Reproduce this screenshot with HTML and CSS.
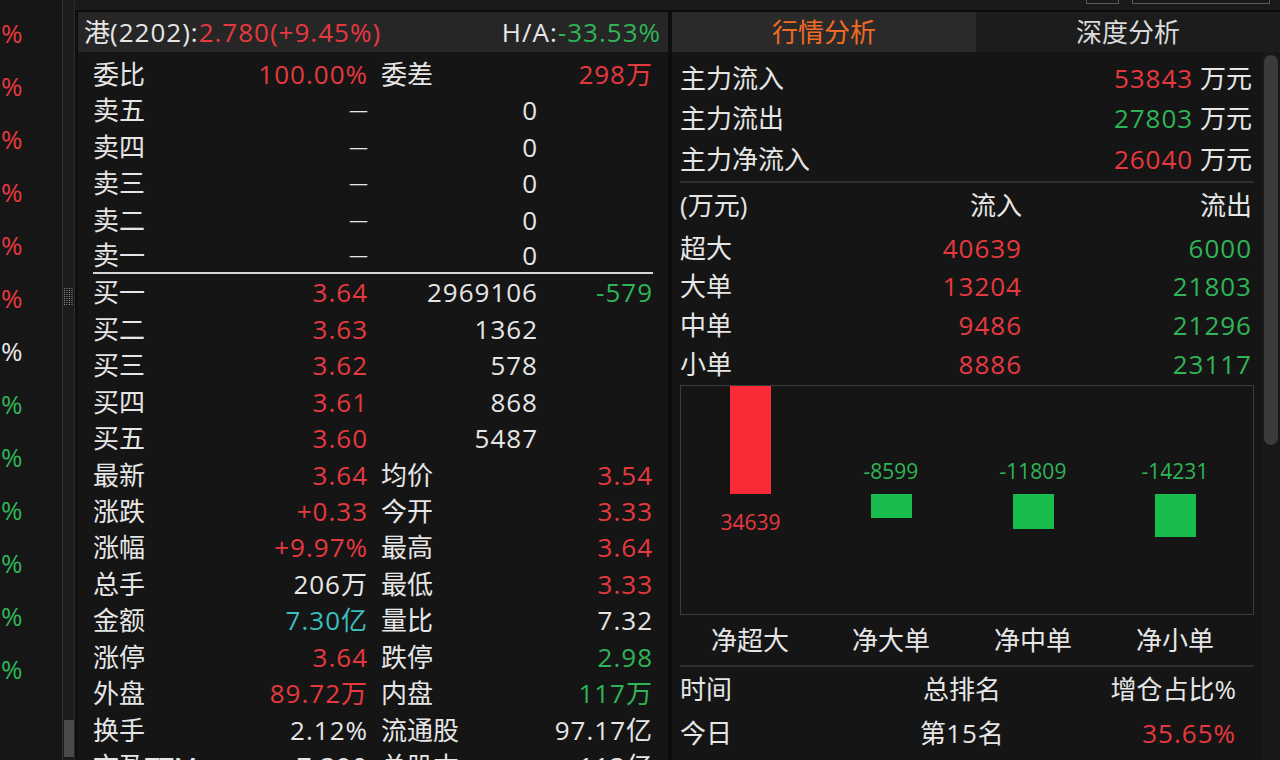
FILE: index.html
```html
<!DOCTYPE html>
<html lang="zh-CN">
<head>
<meta charset="utf-8">
<title>行情分析</title>
<link rel="stylesheet" href="styles.css">
</head>
<body>
<div class="screen">
  <aside class="ticker">
    <div class="pct up">%</div>
    <div class="pct up">%</div>
    <div class="pct up">%</div>
    <div class="pct up">%</div>
    <div class="pct up">%</div>
    <div class="pct up">%</div>
    <div class="pct flat">%</div>
    <div class="pct down">%</div>
    <div class="pct down">%</div>
    <div class="pct down">%</div>
    <div class="pct down">%</div>
    <div class="pct down">%</div>
    <div class="pct down">%</div>
  </aside>
  <div class="splitter">
    <svg class="grip" width="11" height="17" viewBox="0 0 11 17">
      <g stroke="#8c8c8c" stroke-width="1" stroke-dasharray="1 1">
        <line x1="1.5" y1="0" x2="1.5" y2="17"/>
        <line x1="4" y1="0" x2="4" y2="17"/>
        <line x1="6.5" y1="0" x2="6.5" y2="17"/>
        <line x1="9" y1="0" x2="9" y2="17"/>
      </g>
    </svg>
    <div class="thumb"></div>
  </div>
  <div class="workspace">
    <div class="topbar">
      <span class="tb-box small"></span>
      <span class="tb-box wide"></span>
    </div>
    <div class="panels">
      <section class="quote">
        <header class="quote-head">
          <div><span class="flat">港</span><span class="flat num">(2202):</span><span class="up num">2.780(+9.45%)</span></div>
          <div><span class="flat num">H/A:</span><span class="down num">-33.53%</span></div>
        </header>
        <div class="book">
          <div class="row"><span>委比</span><span class="v up num">100.00%</span><span class="l2">委差</span><span class="v up num">298万</span></div>
          <div class="row"><span>卖五</span><span class="v"><span class="dash">—</span></span><span class="v num">0</span><span></span></div>
          <div class="row"><span>卖四</span><span class="v"><span class="dash">—</span></span><span class="v num">0</span><span></span></div>
          <div class="row"><span>卖三</span><span class="v"><span class="dash">—</span></span><span class="v num">0</span><span></span></div>
          <div class="row"><span>卖二</span><span class="v"><span class="dash">—</span></span><span class="v num">0</span><span></span></div>
          <div class="row last-sell"><span>卖一</span><span class="v"><span class="dash">—</span></span><span class="v num">0</span><span></span></div>
          <div class="row"><span>买一</span><span class="v up num">3.64</span><span class="v num">2969106</span><span class="v down num">-579</span></div>
          <div class="row"><span>买二</span><span class="v up num">3.63</span><span class="v num">1362</span><span></span></div>
          <div class="row"><span>买三</span><span class="v up num">3.62</span><span class="v num">578</span><span></span></div>
          <div class="row"><span>买四</span><span class="v up num">3.61</span><span class="v num">868</span><span></span></div>
          <div class="row"><span>买五</span><span class="v up num">3.60</span><span class="v num">5487</span><span></span></div>
          <div class="row"><span>最新</span><span class="v up num">3.64</span><span class="l2">均价</span><span class="v up num">3.54</span></div>
          <div class="row"><span>涨跌</span><span class="v up num">+0.33</span><span class="l2">今开</span><span class="v up num">3.33</span></div>
          <div class="row"><span>涨幅</span><span class="v up num">+9.97%</span><span class="l2">最高</span><span class="v up num">3.64</span></div>
          <div class="row"><span>总手</span><span class="v num">206万</span><span class="l2">最低</span><span class="v up num">3.33</span></div>
          <div class="row"><span>金额</span><span class="v cyan num">7.30亿</span><span class="l2">量比</span><span class="v num">7.32</span></div>
          <div class="row"><span>涨停</span><span class="v up num">3.64</span><span class="l2">跌停</span><span class="v down num">2.98</span></div>
          <div class="row"><span>外盘</span><span class="v up num">89.72万</span><span class="l2">内盘</span><span class="v down num">117万</span></div>
          <div class="row"><span>换手</span><span class="v num">2.12%</span><span class="l2">流通股</span><span class="v num">97.17亿</span></div>
          <div class="row"><span>市盈TTM</span><span class="v num">7.390</span><span class="l2">总股本</span><span class="v num">113亿</span></div>
        </div>
      </section>
      <section class="analysis">
        <nav class="tabs">
          <div class="tab active">行情分析</div>
          <div class="tab">深度分析</div>
        </nav>
        <div class="analysis-body">
          <div class="content">
            <div class="flow"><span>主力流入</span><span><span class="up num">53843</span> 万元</span></div>
            <div class="flow"><span>主力流出</span><span><span class="down num">27803</span> 万元</span></div>
            <div class="flow"><span>主力净流入</span><span><span class="up num">26040</span> 万元</span></div>
            <div class="sep"></div>
            <div class="trow head"><span>(万元)</span><span class="r">流入</span><span class="r">流出</span></div>
            <div class="trow"><span>超大</span><span class="r up num">40639</span><span class="r down num">6000</span></div>
            <div class="trow"><span>大单</span><span class="r up num">13204</span><span class="r down num">21803</span></div>
            <div class="trow"><span>中单</span><span class="r up num">9486</span><span class="r down num">21296</span></div>
            <div class="trow"><span>小单</span><span class="r up num">8886</span><span class="r down num">23117</span></div>
            <div class="chart">
              <div class="col">
                <div class="above"><div class="bar red" style="height:108px"></div></div>
                <div class="below"><span class="bval up pos">34639</span></div>
              </div>
              <div class="col">
                <div class="above"><span class="bval down neg">-8599</span></div>
                <div class="below"><div class="bar green" style="height:24px"></div></div>
              </div>
              <div class="col">
                <div class="above"><span class="bval down neg">-11809</span></div>
                <div class="below"><div class="bar green" style="height:35px"></div></div>
              </div>
              <div class="col">
                <div class="above"><span class="bval down neg">-14231</span></div>
                <div class="below"><div class="bar green" style="height:43px"></div></div>
              </div>
            </div>
            <div class="chart-labels"><span>净超大</span><span>净大单</span><span>净中单</span><span>净小单</span></div>
            <div class="sep"></div>
            <div class="rank head"><span>时间</span><span class="c">总排名</span><span class="r">增仓占比%</span></div>
            <div class="rank"><span>今日</span><span class="c">第<span class="num">15</span>名</span><span class="r up num">35.65%</span></div>
          </div>
          <div class="vscroll"><div class="vthumb"></div></div>
        </div>
      </section>
    </div>
  </div>
</div>
</body>
</html>
```

FILE: styles.css
```css
* { box-sizing: border-box; margin: 0; padding: 0; }

html, body {
  width: 1280px;
  height: 760px;
  overflow: hidden;
  background: #151515;
}

body {
  font-family: "Open Sans", "Noto Sans CJK SC", sans-serif;
  font-size: 26px;
  color: #e6e6e6;
}

.up { color: #e5393f; }
.down { color: #2fb457; }
.flat { color: #e6e6e6; }
.cyan { color: #3abdbd; }
.num { letter-spacing: 1px; }

.screen {
  display: flex;
  height: 760px;
}

/* left ticker strip */
.ticker {
  width: 62px;
  background: #161616;
  display: flex;
  flex-direction: column;
  padding-top: 6.8px;
  overflow: hidden;
}

.pct {
  height: 53px;
  line-height: 53px;
  padding-left: 1px;
  flex: none;
}

/* splitter */
.splitter {
  width: 13px;
  background: #1c1c1c;
  border-left: 1px solid #303030;
  border-right: 1px solid #2b2b2b;
  display: flex;
  flex-direction: column;
  align-items: center;
}

.grip {
  margin-top: 288px;
  display: block;
}

.thumb {
  margin-top: auto;
  margin-bottom: 3px;
  width: 10px;
  height: 37px;
  background: #4a4a4a;
}

/* workspace */
.workspace {
  flex: 1;
  display: flex;
  flex-direction: column;
  min-width: 0;
}

.topbar {
  height: 12px;
  background: #1a1a1a;
  border-bottom: 2px solid #0b0b0b;
  display: flex;
  justify-content: flex-end;
  align-items: flex-start;
  padding-right: 10px;
  gap: 13px;
}

.tb-box {
  height: 4px;
  border: 1px solid #5a5a5a;
  border-top: none;
}

.tb-box.small { width: 33px; }
.tb-box.wide { width: 138px; }

.panels {
  flex: 1;
  display: flex;
  gap: 4px;
  background: #0d0d0d;
  min-height: 0;
}

/* quote panel */
.quote {
  width: 593px;
  border-left: 3px solid #0f0f0f;
  background: #151515;
  overflow: hidden;
}

.quote-head {
  height: 40px;
  background: #262626;
  display: flex;
  justify-content: space-between;
  align-items: center;
  padding: 0 7px 0 6px;
  line-height: 40px;
}

.book {
  padding: 3.8px 15px 0 15px;
}

.row {
  display: grid;
  grid-template-columns: 120px 155px 170px 115px;
  height: 36.44px;
  line-height: 36.44px;
  white-space: nowrap;
}

.row .v { text-align: right; }
.row .l2 { padding-left: 13px; }

.row.last-sell {
  border-bottom: 2px solid #d6d6d6;
  line-height: 34.44px;
}

.dash {
  font-size: 19px;
  vertical-align: top;
}

/* analysis panel */
.analysis {
  width: 608px;
  background: #151515;
  display: flex;
  flex-direction: column;
}

.tabs {
  display: flex;
  height: 40px;
}

.tab {
  flex: 1;
  text-align: center;
  line-height: 40px;
  background: #1c1c1c;
  color: #dadada;
}

.tab.active {
  background: #2a2a2a;
  color: #f26b24;
}

.analysis-body {
  flex: 1;
  display: flex;
  min-height: 0;
}

.content {
  flex: 1;
  padding: 5.75px 8px 0 8px;
  white-space: nowrap;
}

.flow {
  display: flex;
  justify-content: space-between;
  height: 40.5px;
  line-height: 40.5px;
  padding-right: 2px;
}

.sep {
  height: 2px;
  background: #303030;
  margin-top: 1.75px;
}

.trow {
  display: grid;
  grid-template-columns: 140px 202px 230px;
  height: 38.7px;
  line-height: 38.7px;
}

.trow.head {
  height: 45.5px;
  line-height: 45.5px;
}

.r { text-align: right; }
.c { text-align: center; }

.chart {
  margin-top: 1.7px;
  height: 230px;
  border: 1px solid #3a3a3a;
  display: grid;
  grid-template-columns: 139px 142px 142px 142px;
}

.col {
  display: flex;
  flex-direction: column;
  align-items: center;
}

.above {
  height: 108px;
  display: flex;
  flex-direction: column;
  justify-content: flex-end;
  align-items: center;
}

.below {
  display: flex;
  flex-direction: column;
  align-items: center;
}

.bar { width: 41px; }
.bar.red { background: #fb2a37; }
.bar.green { background: #19bd4d; }

.bval {
  font-size: 21px;
  line-height: 24px;
}

.bval.neg { margin-bottom: 11px; }
.bval.pos { margin-top: 16px; }

.chart-labels {
  display: grid;
  grid-template-columns: 140px 142px 142px 142px;
  height: 50.3px;
  line-height: 50px;
  text-align: center;
}

.chart-labels + .sep { margin-top: 0; }

.rank {
  display: grid;
  grid-template-columns: 188px 188px 188px;
  height: 44px;
  line-height: 44px;
}

.rank .r { padding-right: 8px; }

.vscroll {
  width: 18px;
  padding: 3px 2px 0 2px;
  background: #181818;
}

.vthumb {
  width: 14px;
  height: 390px;
  border-radius: 7px;
  background: #3b3b3b;
}
```
